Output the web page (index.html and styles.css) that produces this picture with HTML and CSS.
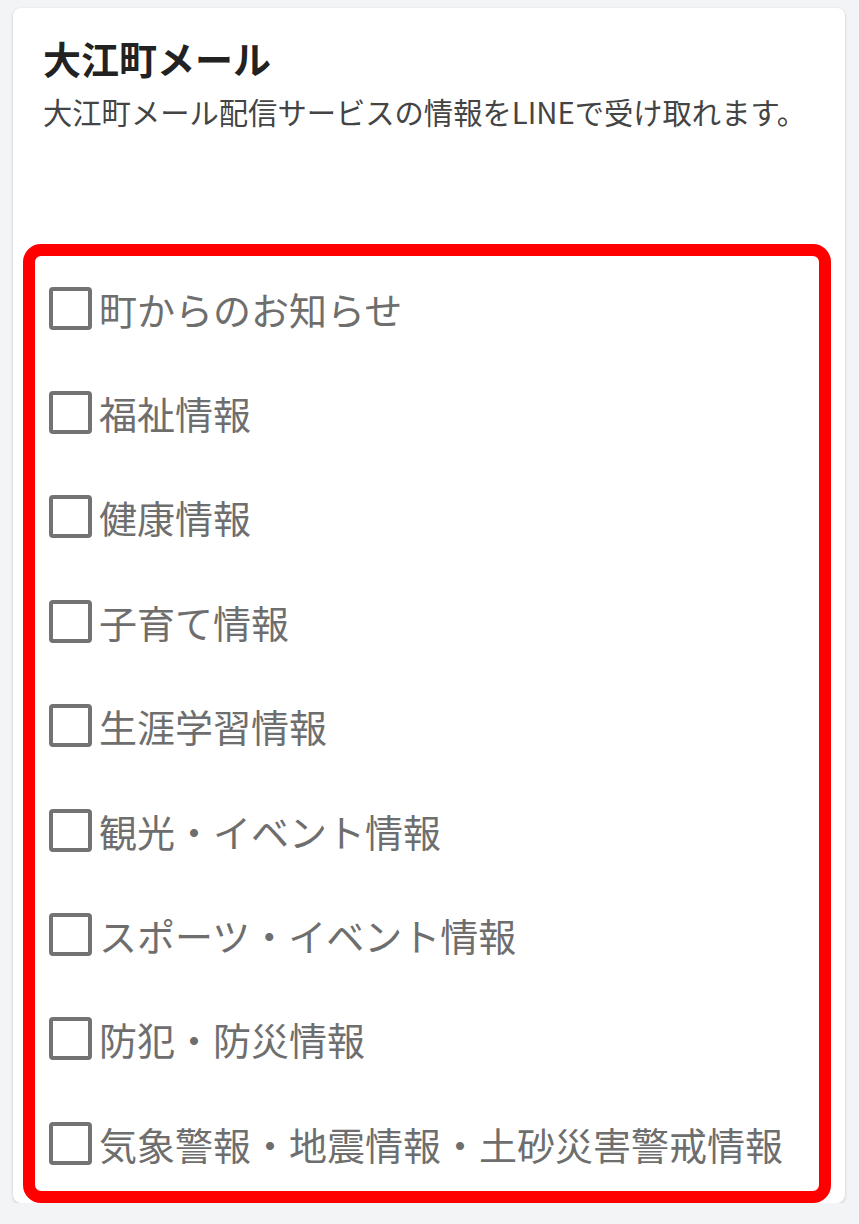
FILE: index.html
```html
<!DOCTYPE html>
<html lang="ja">
<head>
  <meta charset="UTF-8">
  <title>大江町メール</title>
  <link rel="stylesheet" href="styles.css">
</head>
<body>
  <div class="card">
    <div class="card-head">
      <h1 class="title">大江町メール</h1>
      <p class="desc">大江町メール配信サービスの情報をLINEで受け取れます。</p>
    </div>

    <!-- 配信カテゴリ -->
    <ul class="options">
      <li><label><span class="box"></span>町からのお知らせ</label></li>
      <li><label><span class="box"></span>福祉情報</label></li>
      <li><label><span class="box"></span>健康情報</label></li>
      <li><label><span class="box"></span>子育て情報</label></li>
      <li><label><span class="box"></span>生涯学習情報</label></li>
      <li><label><span class="box"></span>観光・イベント情報</label></li>
      <li><label><span class="box"></span>スポーツ・イベント情報</label></li>
      <li><label><span class="box"></span>防犯・防災情報</label></li>
      <li><label><span class="box"></span>気象警報・地震情報・土砂災害警戒情報</label></li>
    </ul>
  </div>
</body>
</html>
```

FILE: styles.css
```css
/* Basic styling for the settings card */
body {
  font-family: "Noto Sans CJK JP", "Noto Sans", sans-serif;
  background-color: #f3f4f6;
  margin: 0;
  padding: 0;
}

.card {
  margin: 8px 14px 0 13px;
  background-color: #fff;
  border-radius: 8px;
  box-shadow: 0 1px 3px rgba(0,0,0,0.2);
}

.card-head {
  padding: 25px 30px 0;
  height: 198px;
  box-sizing: border-box;
}

.title {
  margin: 0;
  font-size: 38px;
  line-height: 50px;
  font-weight: bold;
  color: #222;
}

.desc {
  margin: 10px 0 0;
  font-size: 29.3px;
  line-height: 36px;
  color: #444;
}

.options {
  list-style-type: none;
  box-sizing: border-box;
  height: 959px;
  margin: 38px 14px 0 10px;
  padding: 0 0 0 14px;
  border: 12px solid #ff0000;
  border-radius: 18px;
}

.options li {
  height: 104.4px;
  display: flex;
  align-items: center;
}

.options label {
  display: flex;
  align-items: center;
  font-size: 38px;
  color: #6e6e6e;
}

.box {
  width: 35px;
  height: 35px;
  border: 4px solid #737373;
  border-radius: 4px;
  margin-right: 7px;
}
```
